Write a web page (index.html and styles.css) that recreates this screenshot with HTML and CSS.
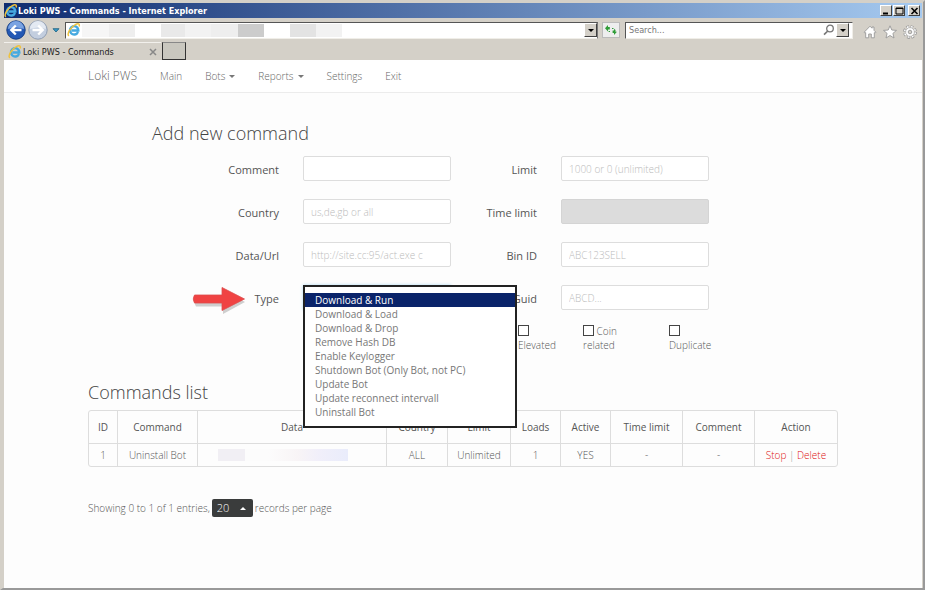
FILE: index.html
```html
<!DOCTYPE html>
<html lang="en">
<head>
<meta charset="utf-8">
<title>Loki PWS - Commands</title>
<link rel="stylesheet" href="styles.css">
</head>
<body>
<svg class="defs" width="0" height="0" aria-hidden="true">
  <symbol id="ie" viewBox="0 0 16 16">
    <path d="M12.6 10.3A4.8 4.8 0 1 1 13 8.6H5.2" fill="none" stroke="#45a9e0" stroke-width="2.700"/>
    <path d="M2.2 14.8C-.8 12.500 4.500 4.200 9.500 1.800c3.500-1.800 5.300-.8 4.300 2.200" fill="none" stroke="#f0c23c" stroke-width="1.700"/>
  </symbol>
</svg>
<div class="window">
  <header class="titlebar">
    <svg class="title-icon"><use href="#ie"/></svg>
    <span class="title">Loki PWS - Commands - Internet Explorer</span>
    <div class="window-buttons">
      <button type="button" aria-label="Minimize"><svg viewBox="0 0 9 8"><path d="M1 6.500h5" stroke="#000" stroke-width="2"/></svg></button>
      <button type="button" aria-label="Maximize"><svg viewBox="0 0 9 8"><path d="M1 1h7v6H1z" stroke="#000" fill="none"/><path d="M1 1.500h7" stroke="#000"/></svg></button>
      <button type="button" class="close" aria-label="Close"><svg viewBox="0 0 9 8"><path d="M1.500 1l6 6M7.500 1l-6 6" stroke="#000" stroke-width="1.600"/></svg></button>
    </div>
  </header>
  <div class="toolbar">
    <button type="button" class="nav-button back" aria-label="Back"><svg viewBox="0 0 20 20"><circle cx="10" cy="10" r="9.200" fill="#2459b5" stroke="#173f86"/><path d="M2 9a8 8 0 0 1 16 0q-8-3-16 0z" fill="#7aa3e2"/><path d="M15.500 10H6M9.800 5.500L5.300 10l4.500 4.500" fill="none" stroke="#fff" stroke-width="2.400"/></svg></button>
    <button type="button" class="nav-button" aria-label="Forward"><svg viewBox="0 0 20 20"><circle cx="10" cy="10" r="9.200" fill="#c3cedf" stroke="#8f9db2"/><path d="M2 9a8 8 0 0 1 16 0q-8-3-16 0z" fill="#e3e9f2"/><path d="M4.500 10H14M10.200 5.500l4.500 4.500-4.500 4.500" fill="none" stroke="#fff" stroke-width="2.400"/></svg></button>
    <svg class="recent" viewBox="0 0 8 5"><path d="M1 .7h6L4 4z" fill="#3b9cc9" stroke="#1a607f" stroke-width=".8"/></svg>
    <div class="address">
      <svg class="small-icon"><use href="#ie"/></svg>
      <input type="text" aria-label="Address">
      <button type="button" class="drop" aria-label="Show addresses"></button>
    </div>
    <button type="button" class="refresh" aria-label="Refresh"><svg viewBox="0 0 14 12"><path d="M1 4.200L4 1v2h1.800v2.400H4v2z" fill="#2f9d38"/><path d="M4.600 7.500H6M8 4.500h1.500" stroke="#2f9d38"/><path d="M13 7.800L10 11V9H8.600V6.600H10l.2-1.800 1.300 1.200v1.800z" fill="#2f9d38"/></svg></button>
    <div class="search">
      <input type="text" placeholder="Search..." aria-label="Search">
      <svg class="magnifier" viewBox="0 0 12 12"><circle cx="7" cy="4.500" r="3.300" fill="none" stroke="#777" stroke-width="1.300"/><path d="M4.800 7L1 10.700" stroke="#777" stroke-width="1.700"/></svg>
      <button type="button" class="drop" aria-label="Search options"></button>
    </div>
    <div class="tools">
      <button type="button" aria-label="Home"><svg viewBox="0 0 14 14"><path d="M1.200 7.200L7 1.200l2 2V2h2v3.300l1.900 1.900-.8.900-.8-.5v5.200H8.300V9H5.700v3.800H2.700V7.600l-.8.500z" fill="#fff" stroke="#999" stroke-width=".9"/></svg></button>
      <button type="button" aria-label="Favorites"><svg viewBox="0 0 14 14"><path d="M7 .8l1.800 4.200 4.700.4-3.600 3 1.100 4.600L7 10.500 3 13l1.100-4.600-3.600-3 4.700-.4z" fill="#fff" stroke="#999" stroke-width=".9"/></svg></button>
      <button type="button" aria-label="Tools"><svg viewBox="0 0 14 14"><circle cx="7" cy="7" r="5.500" fill="none" stroke="#999" stroke-width="2.800" stroke-dasharray="2.600 1.720"/><circle cx="7" cy="7" r="5.300" fill="none" stroke="#fff" stroke-width="1.600" stroke-dasharray="1.700 2.463" stroke-dashoffset="-.4"/><circle cx="7" cy="7" r="4.300" fill="#fff" stroke="#aaa" stroke-width=".6"/><circle cx="7" cy="7" r="1.800" fill="#d4d0c8" stroke="#999" stroke-width=".9"/></svg></button>
    </div>
  </div>
  <div class="tabs">
    <div class="tab">
      <svg class="small-icon"><use href="#ie"/></svg>
      <span>Loki PWS - Commands</span>
      <button type="button" aria-label="Close tab"><svg viewBox="0 0 8 8"><path d="M1 1l6 6M7 1L1 7" stroke="#888" stroke-width="1.500"/></svg></button>
    </div>
    <button type="button" class="new-tab" aria-label="New tab"></button>
  </div>
  <main class="page">
    <nav class="navbar">
      <div class="container nav-items">
        <a class="brand" href="#">Loki PWS</a>
        <a href="#">Main</a>
        <a class="has-menu" href="#">Bots</a>
        <a class="has-menu" href="#">Reports</a>
        <a href="#">Settings</a>
        <a href="#">Exit</a>
      </div>
    </nav>
    <div class="container">
      <form class="command-form">
        <h2>Add new command</h2>
        <div class="fields">
          <label for="comment">Comment</label><input id="comment" type="text">
          <label for="limit">Limit</label><input id="limit" type="text" placeholder="1000 or 0 (unlimited)">
          <label for="country">Country</label><input id="country" type="text" placeholder="us,de,gb or all">
          <label for="time">Time limit</label><input id="time" type="text" disabled>
          <label for="data">Data/Url</label><input id="data" type="text" placeholder="http://site.cc:95/act.exe c">
          <label for="bin">Bin ID</label><input id="bin" type="text" placeholder="ABC123SELL">
          <label class="type-label" for="type">Type
            <svg class="arrow" viewBox="0 0 56 30"><path d="M4 10.500h27V3l22 12-22 12v-7.500H4q-3-4.500 0-9z" fill="#777" opacity=".35" transform="translate(1 2)"/><path d="M3.500 10H31V2.500L53.500 14 31 25.500V18H3.500Q1 14 3.500 10z" fill="#f04343" stroke="#dc4c4c" stroke-width=".8"/></svg>
          </label>
          <div class="type-field">
            <select id="type" size="9">
              <option selected>Download &amp; Run</option>
              <option>Download &amp; Load</option>
              <option>Download &amp; Drop</option>
              <option>Remove Hash DB</option>
              <option>Enable Keylogger</option>
              <option>Shutdown Bot (Only Bot, not PC)</option>
              <option>Update Bot</option>
              <option>Update reconnect intervall</option>
              <option>Uninstall Bot</option>
            </select>
          </div>
          <label for="guid">Guid</label><input id="guid" type="text" placeholder="ABCD...">
        </div>
        <div class="checks">
          <label><input type="checkbox"> Elevated</label>
          <label><input type="checkbox"> Coin related</label>
          <label><input type="checkbox"> Duplicate</label>
        </div>
      </form>
      <h2>Commands list</h2>
      <table>
        <colgroup><col class="c-id"><col class="c-command"><col class="c-data"><col class="c-country"><col class="c-limit"><col class="c-short"><col class="c-short"><col class="c-wide"><col class="c-wide"><col class="c-action"></colgroup>
        <thead><tr><th>ID</th><th>Command</th><th>Data</th><th>Country</th><th>Limit</th><th>Loads</th><th>Active</th><th>Time limit</th><th>Comment</th><th>Action</th></tr></thead>
        <tbody><tr><td>1</td><td>Uninstall Bot</td><td><div class="redacted"></div></td><td>ALL</td><td>Unlimited</td><td>1</td><td>YES</td><td>-</td><td>-</td><td class="action"><a href="#">Stop</a> | <a href="#">Delete</a></td></tr></tbody>
      </table>
      <div class="pager">
        <span>Showing 0 to 1 of 1 entries,</span>
        <div class="per-page"><select aria-label="Records per page"><option>20</option></select></div>
        <span>records per page</span>
      </div>
    </div>
  </main>
</div>
</body>
</html>
```
FILE: styles.css
```css
* { box-sizing: border-box; }

body {
  margin: 0;
  font: 300 10px/14px "Open Sans", sans-serif;
  color: #555;
}

button, input, select { font: inherit; color: inherit; margin: 0; }
button { padding: 0; border: 0; background: none; display: grid; place-items: center; }
a { color: inherit; text-decoration: none; }
.defs { position: absolute; }

.window {
  min-height: 100vh;
  display: flex;
  flex-direction: column;
  padding: 1px 1px 0;
  border: solid #d4d0c8;
  border-width: 2px 2px 2px 3px;
  border-right-color: #999;
  border-bottom-color: #999;
  background: #d4d0c8;
}

/* Browser frame */
.titlebar {
  height: 15px;
  display: flex;
  align-items: center;
  padding: 0 2px 0 0;
  background: linear-gradient(90deg, #0f2c70, #a6caf0);
  color: #fff;
}
.title-icon { width: 14px; height: 14px; }
.title { font: bold 9px/14px "DejaVu Sans Condensed", "DejaVu Sans", sans-serif; }
.window-buttons { margin-left: auto; display: flex; gap: 1px; }
.window-buttons button, .drop {
  width: 12px;
  height: 11px;
  background: #d4d0c8;
  border: 1px solid;
  border-color: #fff #404040 #404040 #fff;
}
.window-buttons .close { margin-left: 2px; }
.window-buttons svg { width: 9px; height: 8px; }

.toolbar { height: 24px; display: flex; align-items: center; }
.nav-button svg { width: 20px; height: 20px; display: block; }
.nav-button { margin-left: 2px; }
.recent { width: 8px; height: 5px; margin: 0 5px 0 4px; }
.address, .search {
  display: flex;
  align-items: center;
  height: 17px;
  background: #fff;
  border: 1px solid #f0eee8;
  border-top: 1px solid #555;
  border-left: 1px solid #555;
}
.address { flex: 1; border-right-color: #777; }
.address input, .search input {
  flex: 1;
  min-width: 0;
  height: 13px;
  border: 0;
  padding: 0 3px;
  background: none;
  font: 9px/13px "DejaVu Sans Condensed", "DejaVu Sans", sans-serif;
}
.address input {
  background: linear-gradient(90deg, #f6f6f6 27px, #eee 27px 53px, #fff 53px 79px, #e9e9e9 79px 103px, #f2f2f2 103px 129px, #eee 129px 156px, #ccc 156px 182px, #fff 182px 208px, #e3e3e3 208px 234px, #f2f2f2 234px 260px, #fff 260px);
}
.small-icon { width: 14px; height: 14px; margin: 0 1px; }
.search input::placeholder { color: #777; }
.drop { width: 13px; height: 14px; }
.drop::before, .has-menu::after {
  content: "";
  border: 3px solid transparent;
  border-top-color: #000;
  border-bottom: 0;
}
.refresh { width: 18px; height: 16px; margin: 0 5px 0 4px; background: #eee; border: 1px solid #bbb; }
.refresh svg { width: 14px; height: 12px; }
.search { width: 228px; }
.search .drop { margin-right: 3px; }
.magnifier { width: 12px; height: 12px; margin-right: 1px; }
.tools { display: flex; gap: 6px; margin: 3px 5px 0 10px; }
.tools svg { width: 14px; height: 14px; display: block; }

.tabs { display: flex; height: 18px; align-items: flex-end; }
.tab {
  display: flex;
  align-items: center;
  width: 157px;
  height: 18px;
  padding: 0 4px 0 3px;
  border-top: 1px solid #f2f0ec;
  font: 9px/14px "DejaVu Sans Condensed", "DejaVu Sans", sans-serif;
  color: #222;
}
.tab button { margin-left: auto; }
.tab button svg { width: 8px; height: 8px; }
.new-tab {
  width: 24px;
  height: 18px;
  margin-left: 1px;
  border: 1px solid #333;
  border-top-color: #888;
  background: #c9c7bf;
}

/* Page */
.page { flex: 1; background: #fdfdfd; }
.container { width: calc(100% - 32px); max-width: 750px; margin: 0 auto; }
.navbar { background: #fff; border-bottom: 1px solid #ececec; }
.nav-items { display: flex; align-items: center; height: 32px; gap: 23px; color: #666; }
.brand { font-size: 12px; }
.has-menu { display: flex; align-items: center; gap: 4px; }
.has-menu::after { border-top-color: #777; }

h2 { margin: 0; font-size: 18px; line-height: 26px; font-weight: 300; color: #444; }
.command-form { padding: 27px 0 27px; }
.command-form h2 { padding-left: 64px; }
.fields {
  display: grid;
  grid-template-columns: 191px 172px 86px 172px;
  gap: 18px 0;
  margin-top: 10px;
}
.fields > label { padding-top: 6px; text-align: right; font-size: 11px; line-height: 15px; font-weight: 400; color: #555; }
.fields > input, .type-field { margin-left: 24px; width: 148px; height: 25px; }
.fields > input {
  padding: 0 7px;
  border: 1px solid #ddd;
  border-radius: 2px;
  background: #fff;
}
.fields > input:disabled { background: #dcdcdc; border-color: #d4d4d4; }
.fields > input::placeholder { color: #bbb; }
.type-label, .type-field { position: relative; }
.arrow { position: absolute; right: 32px; top: 0; width: 56px; height: 30px; }
.type-field { box-shadow: 0 0 3px #a9d8f2; }
.type-field select {
  position: absolute;
  z-index: 1;
  top: 0;
  left: 0;
  width: 214px;
  height: 143px;
  padding: 6px 0;
  overflow: hidden;
  border: 2px solid #222;
  border-radius: 0;
  outline: 0;
  background: #fff;
  color: #777;
}
.type-field option { min-height: 14px; padding: 0 10px; line-height: 14px; }
.type-field option:checked { background: #0a246a linear-gradient(#0a246a, #0a246a); color: #fff; }

.checks {
  display: grid;
  grid-template-columns: 65px 86px 50px;
  margin: 14px 0 0 430px;
}
.checks label { max-width: 44px; }
.checks input {
  appearance: none;
  width: 11px;
  height: 11px;
  border: 1px solid #444;
  background: #fff;
  vertical-align: -1px;
}

table {
  width: 100%;
  margin-top: 5px;
  table-layout: fixed;
  border: 1px solid #ddd;
  border-radius: 3px;
  border-spacing: 0;
  text-align: center;
}
th, td { padding: 0; height: 23px; border-left: 1px solid #ddd; }
th { height: 32px; font-weight: 400; color: #555; }
td { border-top: 1px solid #ddd; }
th:first-child, td:first-child { border-left: 0; }
.c-id { width: 28px; }
.c-command { width: 80px; }
.c-country { width: 61px; }
.c-limit { width: 63px; }
.c-short { width: 50px; }
.c-wide { width: 72px; }
.c-action { width: 83px; }
.redacted {
  height: 12px;
  margin: 0 38px 0 20px;
  background: linear-gradient(90deg, #f1eff4 27px, #fcfcfc 27px 50px, #f8f4f6 80px, #f1effa 100px, #e9ecfb);
}
.action { color: #999; }
.action a { color: #d11; }

.pager { display: flex; align-items: center; gap: 2px; margin-top: 32px; }
.per-page { position: relative; width: 41px; height: 18px; }
.per-page select {
  appearance: none;
  width: 100%;
  height: 100%;
  padding: 0 5px;
  border: 0;
  border-radius: 2px;
  background: #3a3c3c;
  color: #fff;
  font-size: 11px;
}
.per-page::after {
  content: "";
  position: absolute;
  right: 7px;
  top: 8px;
  border: 3px solid transparent;
  border-bottom-color: #fff;
  border-top: 0;
}
```
